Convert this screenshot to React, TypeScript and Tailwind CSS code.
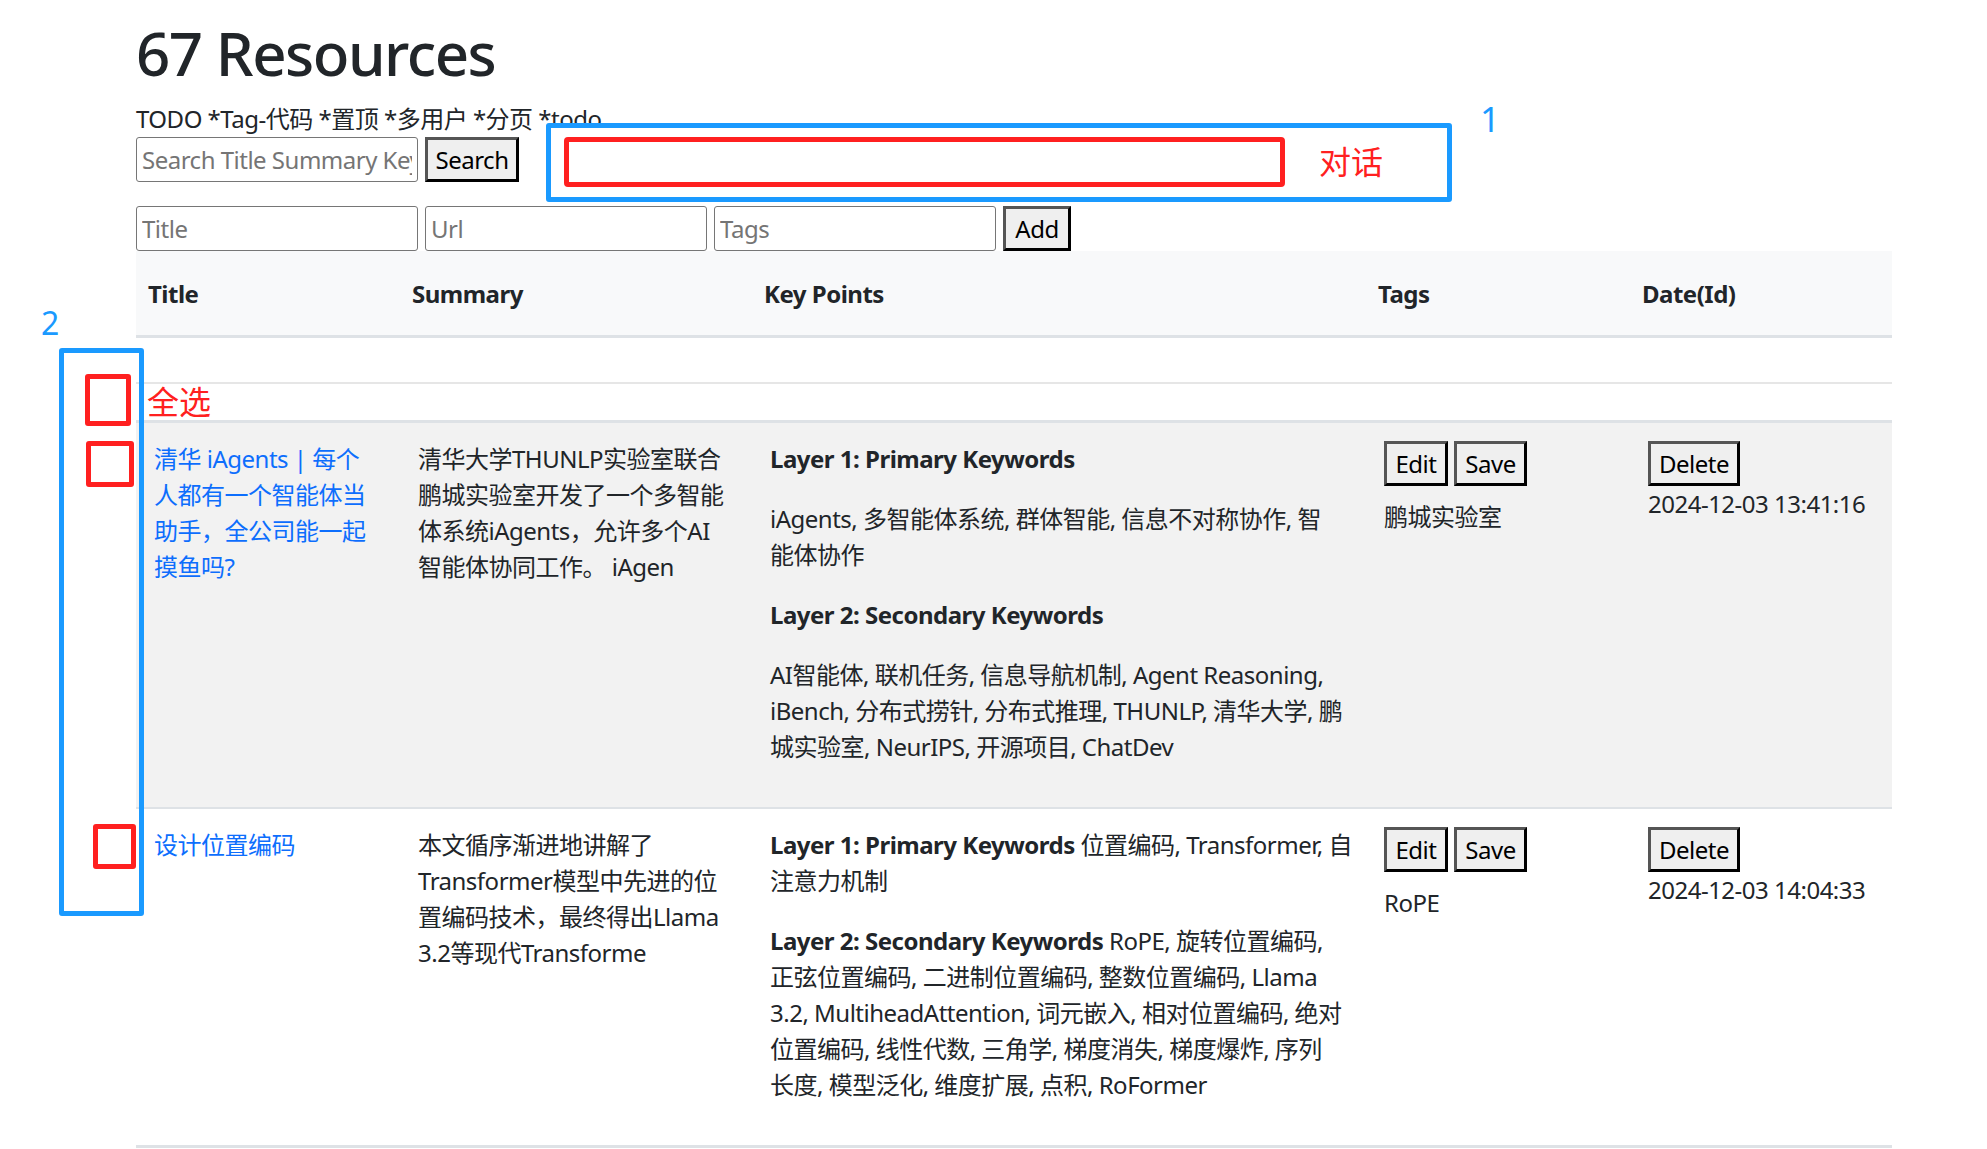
import React from 'react';

const btn =
  'h-[45px] bg-[#efefef] border-[3px] border-t-[#555] border-l-[#555] border-b-black border-r-black text-black text-[24px] leading-none flex items-center justify-center';
const inputCls =
  'w-[282px] h-[45px] border border-[#767676] rounded-[3px] px-[5px] text-[24px] placeholder:text-[#757575] outline-none bg-white';

interface Row {
  title: string[];
  summary: string[];
  points: React.ReactNode[];
  tag: string;
  date: string;
  striped?: boolean;
}

const rows: Row[] = [
  {
    title: ['清华 iAgents | 每个', '人都有一个智能体当', '助手，全公司能一起', '摸鱼吗?'],
    summary: ['清华大学THUNLP实验室联合', '鹏城实验室开发了一个多智能', '体系统iAgents，允许多个AI', '智能体协同工作。 iAgen'],
    points: [
      <strong key="a">Layer 1: Primary Keywords</strong>,
      <>
        iAgents, 多智能体系统, 群体智能, 信息不对称协作, 智<br />能体协作
      </>,
      <strong key="b">Layer 2: Secondary Keywords</strong>,
      <>
        AI智能体, 联机任务, 信息导航机制, Agent Reasoning,
        <br />
        iBench, 分布式捞针, 分布式推理, THUNLP, 清华大学, 鹏
        <br />
        城实验室, NeurIPS, 开源项目, ChatDev
      </>,
    ],
    tag: '鹏城实验室',
    date: '2024-12-03 13:41:16',
    striped: true,
  },
  {
    title: ['设计位置编码'],
    summary: ['本文循序渐进地讲解了', 'Transformer模型中先进的位', '置编码技术，最终得出Llama', '3.2等现代Transforme'],
    points: [
      <>
        <strong>Layer 1: Primary Keywords</strong> 位置编码, Transformer, 自<br />注意力机制
      </>,
      <>
        <strong>Layer 2: Secondary Keywords</strong> RoPE, 旋转位置编码,
        <br />
        正弦位置编码, 二进制位置编码, 整数位置编码, Llama
        <br />
        3.2, MultiheadAttention, 词元嵌入, 相对位置编码, 绝对
        <br />
        位置编码, 线性代数, 三角学, 梯度消失, 梯度爆炸, 序列
        <br />
        长度, 模型泛化, 维度扩展, 点积, RoFormer
      </>,
    ],
    tag: 'RoPE',
    date: '2024-12-03 14:04:33',
  },
];

function ResourceRow({ row, last }: { row: Row; last: boolean }) {
  const td = `align-top px-[18px] pt-[18px] pb-[18px] border-[#dee2e6] ${last ? 'border-b-[3px]' : 'border-b-[2px]'}`;
  return (
    <tr className={row.striped ? 'bg-[#f2f2f2]' : 'bg-white'}>
      <td className={td}>
        <a className="text-[#0d6efd] no-underline">
          {row.title.map((l, i) => (
            <div key={i}>{l}</div>
          ))}
        </a>
      </td>
      <td className={td}>
        {row.summary.map((l, i) => (
          <div key={i}>{l}</div>
        ))}
      </td>
      <td className={`${td} pb-0`}>
        {row.points.map((p, i) => (
          <p key={i} className="mb-[24px]">
            {p}
          </p>
        ))}
      </td>
      <td className={td}>
        <div className="flex gap-[6px]">
          <button className={`${btn} w-[64px]`}>Edit</button>
          <button className={`${btn} w-[73px]`}>Save</button>
        </div>
        <div className="mt-[13px]">{row.tag}</div>
      </td>
      <td className={td}>
        <button className={`${btn} w-[92px]`}>Delete</button>
        <div>{row.date}</div>
      </td>
    </tr>
  );
}

export default function App() {
  return (
    <div className="relative min-h-[1149px] bg-white text-[#212529] text-[24px] leading-[36px] tracking-[-0.5px] font-['Noto_Sans','Noto_Sans_CJK_SC',sans-serif] whitespace-nowrap">
      <div className="pl-[136px] pt-[17px]">
        <h1 className="text-[60px] leading-[72px] font-medium tracking-[-1.5px] mb-[12px]">67 Resources</h1>
        <div>TODO *Tag-代码 *置顶 *多用户 *分页 *todo</div>
        <div className="flex gap-[7px] items-center">
          <input className={inputCls} placeholder="Search Title Summary Key" />
          <button className={`${btn} w-[94px]`}>Search</button>
        </div>
        <div className="flex gap-[7px] items-center mt-[24px]">
          <input className={inputCls} placeholder="Title" />
          <input className={inputCls} placeholder="Url" />
          <input className={inputCls} placeholder="Tags" />
          <button className={`${btn} w-[68px]`}>Add</button>
        </div>

        <table className="table-fixed border-collapse w-[1756px] text-left">
          <colgroup>
            <col className="w-[264px]" />
            <col className="w-[352px]" />
            <col className="w-[614px]" />
            <col className="w-[264px]" />
            <col className="w-[262px]" />
          </colgroup>
          <thead>
            <tr className="bg-[#f8f9fa]">
              {['Title', 'Summary', 'Key Points', 'Tags', 'Date(Id)'].map((h) => (
                <th key={h} className="font-bold px-[12px] pt-[25px] pb-[23px] border-b-[3px] border-[#dee2e6]">
                  {h}
                </th>
              ))}
            </tr>
          </thead>
          <tbody>
            <tr>
              <td colSpan={5} className="h-[46px] border-b-[2px] border-[#e6e6e6]"></td>
            </tr>
            <tr>
              <td colSpan={5} className="h-[39px] border-b-[3px] border-[#dee2e6]"></td>
            </tr>
            {rows.map((r, i) => (
              <ResourceRow key={i} row={r} last={i === rows.length - 1} />
            ))}
          </tbody>
        </table>
      </div>

      {/* annotations drawn over the screenshot */}
      <div className="absolute left-[546px] top-[123px] w-[906px] h-[79px] border-[5px] border-[#1a9aff] rounded-[3px]"></div>
      <div className="absolute left-[564px] top-[137px] w-[721px] h-[50px] border-[5px] border-[#ff2020] rounded-[4px]"></div>
      <div className="absolute left-[1319px] top-[144px] text-[32px] leading-[36px] text-[#ff2020] tracking-normal">对话</div>
      <div className="absolute left-[1480px] top-[101px] text-[35px] leading-[35px] text-[#1a9aff]">1</div>

      <div className="absolute left-[41px] top-[307px] text-[32px] leading-[32px] text-[#1a9aff]">2</div>
      <div className="absolute left-[59px] top-[348px] w-[85px] h-[568px] border-[5px] border-[#1a9aff] rounded-[3px]"></div>
      <div className="absolute left-[85px] top-[374px] w-[46px] h-[52px] border-[5px] border-[#ff2020] rounded-[3px]"></div>
      <div className="absolute left-[86px] top-[441px] w-[48px] h-[46px] border-[5px] border-[#ff2020] rounded-[3px]"></div>
      <div className="absolute left-[93px] top-[824px] w-[43px] h-[45px] border-[5px] border-[#ff2020] rounded-[3px]"></div>
      <div className="absolute left-[147px] top-[384px] text-[32px] leading-[36px] text-[#ff2020] tracking-normal">全选</div>
    </div>
  );
}
